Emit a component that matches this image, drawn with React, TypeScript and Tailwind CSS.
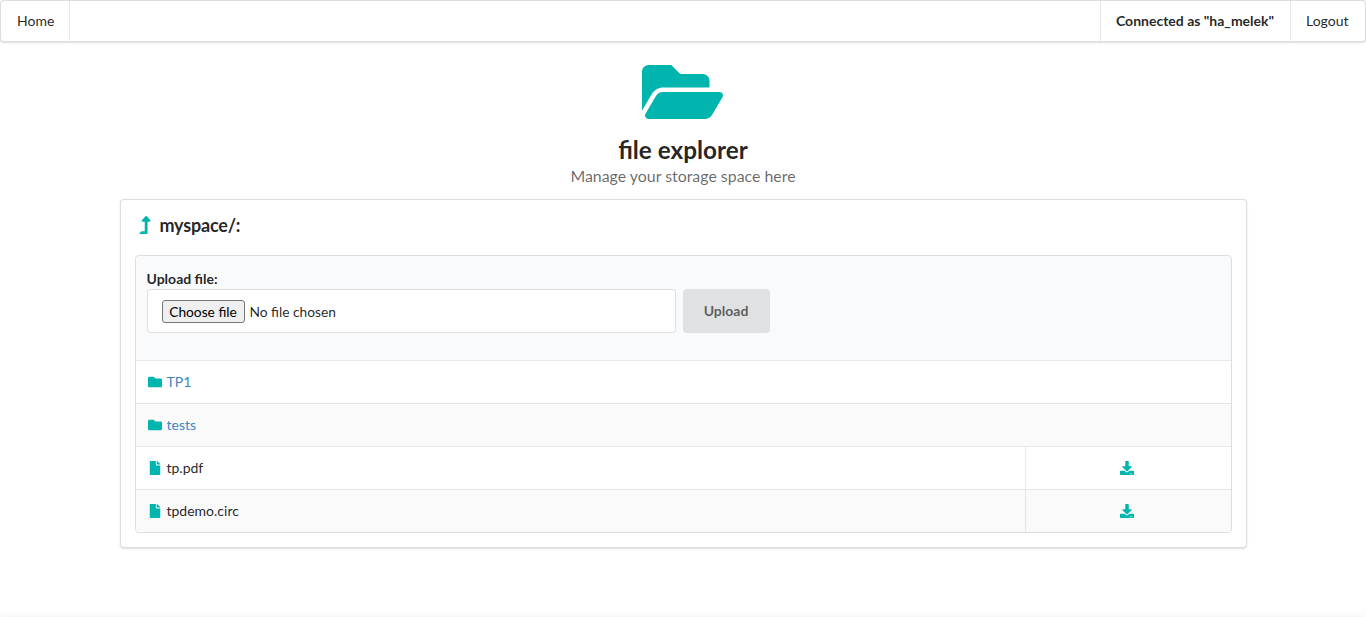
import { FaDownload, FaFile, FaFolder, FaFolderOpen, FaLevelUpAlt } from "react-icons/fa";

const folders = ["TP1", "tests"];
const files = ["tp.pdf", "tpdemo.circ"];

function NavBar() {
  return (
    <nav className="flex h-[42px] rounded-[4px] border border-[#22242626] bg-white leading-[14px] shadow-[0_1px_2px_0_rgba(34,36,38,0.15)]">
      <a className="flex w-[69px] items-center border-r border-[#2224261a] pl-4">Home</a>
      <div className="ml-auto flex">
        <span className="flex w-[190px] items-center border-l border-[#2224261a] pl-[15px] font-bold whitespace-nowrap">Connected as "ha_melek"</span>
        <a className="flex w-[75px] items-center border-l border-[#2224261a] pl-[15px]">Logout</a>
      </div>
    </nav>
  );
}

function UploadForm() {
  return (
    <form className="h-[104px] bg-[#f9fafb] px-[11px] pt-[13px]">
      <label className="block h-5 font-bold leading-5">Upload file:</label>
      <div className="flex gap-[7px]">
        <div className="flex h-11 w-[529px] items-center rounded-[4px] border border-[#22242626] bg-white pl-[14px]">
          <button type="button" className="h-[23px] w-[83px] rounded-[3px] border border-[#767676] bg-[#efefef] text-center text-[13.75px] leading-[21px] text-black">
            Choose file
          </button>
          <span className="mt-px ml-[5px] text-[13.75px]">No file chosen</span>
        </div>
        <button type="button" className="h-11 w-[87px] rounded-[4px] bg-[#e0e1e2] font-bold text-black/60">Upload</button>
      </div>
    </form>
  );
}

function FolderRow({ name }: { name: string }) {
  return (
    <div className="flex h-[43px] items-center border-t border-[#2224261a] pl-[11px] even:bg-white odd:bg-[#fafafa]">
      <FaFolder className="mr-1 h-[14px] w-4 text-[#00b5ad]" />
      <a className="text-[#4183c4]">{name}</a>
    </div>
  );
}

function FileRow({ name }: { name: string }) {
  return (
    <div className="flex h-[43px] border-t border-[#2224261a] even:bg-white odd:bg-[#fafafa]">
      <div className="flex flex-1 items-center pl-[11px]">
        <FaFile className="mr-1 h-[14px] w-4 text-[#00b5ad]" />
        <span>{name}</span>
      </div>
      <div className="flex w-[206px] items-center justify-center border-l border-[#2224261a] pr-[3px]">
        <FaDownload className="size-[14px] text-[#00b5ad]" />
      </div>
    </div>
  );
}

export default function App() {
  return (
    <div className="flex h-[617px] flex-col overflow-hidden bg-white font-['Lato',sans-serif] text-[14px] leading-5 text-black/87">
      <NavBar />
      <header className="flex flex-col items-center pt-[14px]">
        <FaFolderOpen className="mr-px h-[72px] w-[81px] text-[#00b5ad]" />
        <h1 className="mt-[6px] mb-px text-[24.3px] leading-[31px] font-bold">file explorer</h1>
        <p className="text-[15.9px] leading-[19px] text-black/60">Manage your storage space here</p>
      </header>
      <main className="mx-auto mt-[14px] w-[1127px] rounded-[4px] border border-[#22242626] bg-white p-[14px] shadow-[0_1px_2px_0_rgba(34,36,38,0.15)]">
        <h2 className="flex h-[41px] pl-1 text-[18px] leading-[23px] font-bold tracking-[-0.2px]">
          <FaLevelUpAlt className="mt-[2px] mr-[9px] h-[18px] w-3 text-[#00b5ad]" />
          myspace/:
        </h2>
        <section className="overflow-hidden rounded-[4px] border border-[#22242626]">
          <UploadForm />
          {folders.map((name) => (
            <FolderRow key={name} name={name} />
          ))}
          {files.map((name) => (
            <FileRow key={name} name={name} />
          ))}
        </section>
      </main>
      <footer className="mt-auto -mb-5 h-5 bg-white shadow-[0_0_10px_0_rgba(0,0,0,0.07)]" />
    </div>
  );
}
